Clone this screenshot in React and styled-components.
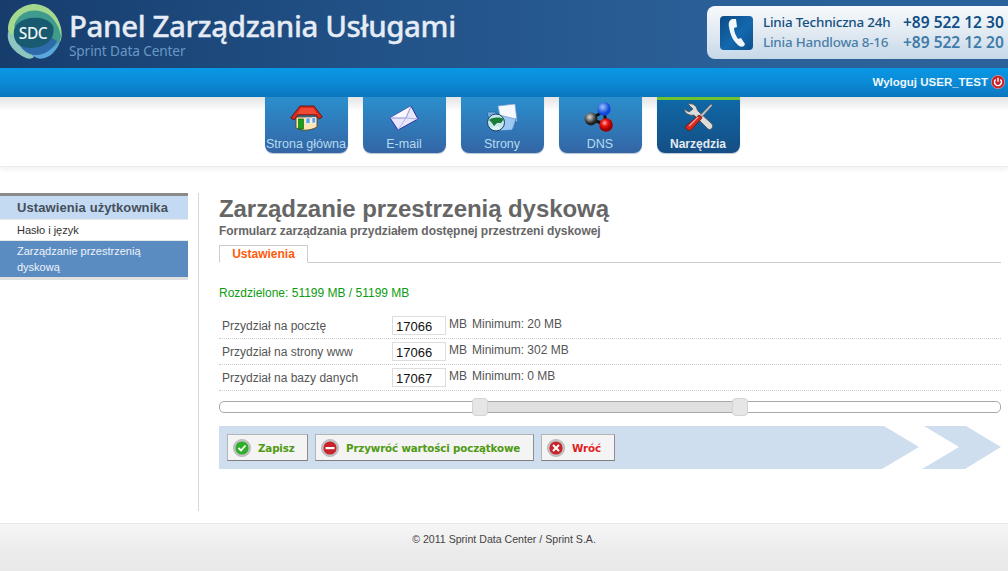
import React from "react";
import styled, { createGlobalStyle } from "styled-components";

const Global = createGlobalStyle`
  html, body { margin: 0; padding: 0; background: #fff; overflow: hidden; }
  body { font-family: "Liberation Sans", Arial, sans-serif; font-size: 12px; color: #555; }
  * { box-sizing: border-box; }
`;

const Page = styled.div`width: 1008px; height: 571px; overflow: hidden; display: flex; flex-direction: column;`;

const Header = styled.header`
  height: 68px; flex: none; display: flex; justify-content: space-between; overflow: hidden;
  background: linear-gradient(90deg, #173d6d 0%, #225389 40%, #2b6199 75%, #2c629b 100%);
`;
const Brand = styled.div`display: flex; padding: 4px 0 0 6px;`;
const BrandText = styled.div`margin-left: 7px; font-family: "Noto Sans", "Open Sans", sans-serif; display: flex; flex-direction: column;`;
const BrandTitle = styled.div`font-size: 29.5px; line-height: 34px; height: 34px; margin-top: 5px; color: #e6ecf5; letter-spacing: -0.4px; white-space: nowrap; font-weight: 500; -webkit-text-stroke: .3px #e6ecf5;`;
const BrandSub = styled.div`font-size: 13.6px; line-height: 16px; color: #6a97c6; white-space: nowrap; letter-spacing: -0.1px;`;

const PhonePanel = styled.div`
  width: 301px; height: 53px; margin-top: 6px; border-radius: 8px 0 0 8px; display: flex; align-items: center;
  padding-left: 13px; overflow: hidden; background: linear-gradient(180deg, #f7fafc 0%, #dfe8f1 55%, #c6d8e8 100%);
`;
const PhoneBadge = styled.div`width: 33px; height: 34px; flex: none; border-radius: 4px; margin-right: 10px; background: linear-gradient(135deg, #0b4a86, #1468ad 55%, #0c4f8f); display: flex; align-items: center; justify-content: center;`;
const PhoneGrid = styled.div`display: grid; grid-template-columns: 140px auto; row-gap: 1px; font-family: "Noto Sans", "Open Sans", sans-serif; white-space: nowrap;`;
const PhoneLabel = styled.div`font-size: 13.4px; line-height: 19px; font-weight: 500; letter-spacing: -0.2px; color: ${p => p.$dim ? "#4a7fa9" : "#14507f"};`;
const PhoneNumber = styled.div`font-size: 15.5px; line-height: 19px; font-weight: 600; letter-spacing: 0; color: ${p => p.$dim ? "#3f7ba8" : "#0f4f85"};`;

const UserBar = styled.div`
  height: 29px; flex: none; display: flex; justify-content: flex-end; align-items: center; gap: 3px; padding: 0 3px 2px 0;
  background: linear-gradient(180deg, #0998e4 0%, #0a8ad6 50%, #0a76bd 100%);
  font-weight: bold; color: #eef6fc; font-size: 11.5px;
`;

const Nav = styled.nav`
  height: 70px; flex: none; display: flex; justify-content: center;
  background: linear-gradient(180deg, #e4e4e4 0, #fff 14px);
  border-bottom: 1px solid #ececec; box-shadow: 0 3px 5px rgba(0,0,0,.05);
`;
const NavInner = styled.div`display: flex; gap: 15px; margin-left: -4px;`;
const Tab = styled.div`
  width: 83px; height: 56px; border-radius: 0 0 8px 8px; display: flex; flex-direction: column; align-items: center; white-space: nowrap;
  padding-top: ${p => p.$active ? "2px" : "5px"}; font-size: 12.5px; line-height: 14px; overflow: hidden;
  color: ${p => p.$active ? "#e4ebf1" : "#b5dbee"}; font-weight: ${p => p.$active ? "bold" : "normal"};
  background: ${p => p.$active ? "linear-gradient(180deg, #0f68a6 0%, #154e84 100%)" : "linear-gradient(180deg, #2b8fcd 0%, #3465a5 100%)"};
  border-top: ${p => p.$active ? "3px solid #6ec22f" : "0"};
  box-shadow: 0 1px 1px rgba(60,90,130,.35);
`;
const TabIcon = styled.div`height: 35px; flex: none; display: flex; align-items: center; padding-bottom: 4px;`;
const TabText = styled.div`font-size: ${p => p.$small ? "12px" : "inherit"};`;

const Body = styled.main`height: 318px; margin-top: 26px; flex: none; display: flex;`;
const Sidebar = styled.aside`width: 188px; flex: none; align-self: flex-start;`;
const SideHead = styled.div`height: 26px; border-top: 3px solid #8a8a8a; background: #c4daf3; font-weight: bold; font-size: 13px; line-height: 23px; padding-left: 17px; color: #444f5b; letter-spacing: .1px;`;
const SideItem = styled.div`
  padding: ${p => p.$active ? "2px 17px 2px" : "0 17px"}; font-size: 11px; line-height: ${p => p.$active ? "16px" : "20px"};
  background: ${p => p.$active ? "#5a8cc2" : "#fff"}; color: ${p => p.$active ? "#eef3f9" : "#333"};
  border-top: 1px solid #e8e8e8; border-bottom: ${p => p.$active ? "3px solid #e0e0e0" : "0"};
`;
const Content = styled.section`margin-left: 10px; width: 803px; border-left: 1px solid #d8d8d8; padding: 0 0 0 20px;`;
const Title = styled.h1`margin: 2px 0 0; font-size: 24px; line-height: 28px; color: #666; font-weight: bold; letter-spacing: -.07px;`;
const Subtitle = styled.div`font-size: 12px; font-weight: bold; line-height: 14px; color: #666; letter-spacing: -.05px; margin-top: 1px;`;
const Tabs = styled.div`height: 18px; margin-top: 7px; border-bottom: 1px solid #ccc;`;
const TabLabel = styled.div`width: 89px; height: 18px; border: 1px solid #ccc; border-bottom: 1px solid #fff; background: #fff; text-align: center; color: #ff5a0a; font-weight: bold; font-size: 12px; line-height: 16px;`;
const Summary = styled.div`margin-top: 23px; height: 15px; line-height: 15px; color: #0c9c10; font-size: 12px;`;
const Form = styled.div`margin-top: 12px;`;
const Row = styled.div`
  height: 26px; display: grid; grid-template-columns: 170px 57px 23px 1fr; padding-left: 3px; border-bottom: 1px dotted #ccc;
  font-size: 12px; color: #555;
`;
const RowLabel = styled.div`line-height: 26px;`;
const ValueBox = styled.div`width: 54px; height: 19px; margin-top: 3px; border: 1px solid #ddd; color: #111; font-size: 13px; line-height: 20px; padding-left: 3px;`;
const Unit = styled.div`line-height: 14px; padding-top: 4px;`;

const Slider = styled.div`margin-top: 10px; height: 12px; border: 1px solid #a9a9a9; border-radius: 5px; position: relative; background: #fff;`;
const Range = styled.div`position: absolute; top: 0; bottom: 0; background: #e0e0e0;`;
const Handle = styled.div`position: absolute; top: -4px; width: 16px; height: 18px; margin-left: -8px; border: 1px solid #d3d3d3; border-radius: 4px; background: #e6e6e6;`;

const ActionRow = styled.div`margin-top: 13px; height: 43px; display: flex; width: 782px;`;
const Band = styled.div`
  width: 700px; height: 43px; flex: none; background: #cfdeef; display: flex; gap: 7px; padding: 8px 0 0 8px;
  clip-path: polygon(0 0, 665px 0, 100% 21px, 663px 100%, 0 100%);
`;
const Chevron = styled.div`
  width: 79px; height: 43px; margin-left: 3px; background: #cfdeef; flex: none;
  clip-path: polygon(2px 0, 44px 0, 100% 21px, 43px 100%, 0 100%, 37px 21px);
`;
const Button = styled.div`
  height: 27px; width: ${p => p.$w}px; flex: none; display: flex; align-items: center; padding-left: 5px;
  border: 1px solid #b4b4b4; border-right-color: #8e8e8e; border-bottom-color: #808080; background: #f4f4f4;
  font-family: "DejaVu Sans", Verdana, sans-serif; font-weight: bold; font-size: 10.3px; white-space: nowrap;
  color: ${p => p.$red ? "#e01d1d" : "#4f9a12"};
`;
const ButtonText = styled.span`margin-left: ${p => p.$gap}px; letter-spacing: -.14px;`;

const Footer = styled.footer`
  margin-top: 12px; height: 48px; flex: none; text-align: center; font-size: 10.6px; line-height: 12px; padding: 9px 0 0 0; color: #444;
  border-top: 1px solid #e8e8e8; background: linear-gradient(180deg, #f6f6f6 0%, #ebebeb 60%, #e9e9e9 100%);
`;

const Logo = () => (
  <svg width="56" height="56" viewBox="0 0 56 56">
    <path d="M2 24C3 10 16 0 29 0c13 1 23 10 26 24 1 6 1 10-1 14L30 30 5 34C3 31 2 28 2 24Z" fill="#a4d88f" />
    <path d="M2 28l14 8 12 17c-2 2-5 2-8 1C9 49 0 40 2 28Z" fill="#8cc6bf" />
    <path d="M54 32c1 6-2 12-7 17-4 4-11 7-16 5-2-1-4-2-5-4l16-9Z" fill="#5aa6dd" />
    <path d="M18 9c8-4 18-3 25 2 7 6 11 14 12 22-2 6-6 10-11 12L26 38 8 22c2-6 5-10 10-13Z" fill="#3f9c8c" />
    <path d="M13 40c3 6 9 11 17 11 9 0 17-6 21-14L36 28 16 32Z" fill="#2d6aa9" />
    <path d="M8 26c1-6 8-11 17-12 9-1 18 1 22 8 2 7-1 15-9 19-8 4-19 4-25 0-4-3-6-9-5-15Z" fill="#185a70" />
    <text x="27" y="35" textAnchor="middle" fontFamily="Noto Sans, sans-serif" fontSize="15.5" fontWeight="500" letterSpacing="-.4" fill="#f0f5f5">SDC</text>
  </svg>
);
const PhoneIcon = () => (
  <svg width="20" height="30" viewBox="0 0 20 30">
    <path d="M5 1C3 2 1 4 2 9c1 7 4 14 9 18 2 2 4 2 6 1l1-2-4-6-3 1c-2-3-4-7-4-11l3-1-1-8Z" fill="#f1f6fa" />
  </svg>
);
const Power = () => (
  <svg width="14" height="14" viewBox="0 0 14 14">
    <circle cx="7" cy="7" r="6.7" fill="#c8242a" stroke="#e9b7b7" strokeWidth=".6" />
    <path d="M4.6 4.6a3.5 3.5 0 1 0 4.8 0" fill="none" stroke="#fff" strokeWidth="1.4" />
    <path d="M7 2.8v4" stroke="#fff" strokeWidth="1.4" />
  </svg>
);
const House = () => (
  <svg width="33" height="26" viewBox="0 0 33 26">
    <path d="M6 12h21v10c-7 4-15 4-21 1Z" fill="#fbe6b8" stroke="#5a3a10" strokeWidth=".8" />
    <rect x="8.5" y="14" width="5" height="10" fill="#16a016" stroke="#0a5a0a" strokeWidth=".6" />
    <rect x="16" y="13" width="4" height="5.5" fill="#5aa2ea" stroke="#fff" strokeWidth=".6" />
    <rect x="22" y="12.5" width="3.5" height="5.5" fill="#5aa2ea" stroke="#fff" strokeWidth=".6" />
    <path d="M.7 13 10 1h14l8.3 11-3 2-4-4H8l-4 5Z" fill="#d9291f" stroke="#5c1510" strokeWidth=".9" />
    <path d="M11 3h12l4 6H7Z" fill="#ee4a33" />
  </svg>
);
const Mail = () => (
  <svg width="30" height="26" viewBox="0 0 30 26">
    <path d="M1 13 22 1l7 13-20 11Z" fill="#e7e6fc" stroke="#2f2f9a" strokeWidth="1" />
    <path d="M1 13 17 13 22 1" fill="#f7f7ff" stroke="#7b7bd0" strokeWidth=".8" />
    <path d="M9 25l8-12 12 1" fill="none" stroke="#a6a6e2" strokeWidth=".8" />
  </svg>
);
const Folder = () => (
  <svg width="32" height="28" viewBox="0 0 32 28">
    <path d="M12 2 29 0l2 17-15 5Z" fill="#f5f8fd" stroke="#7aa0d4" strokeWidth=".7" />
    <path d="M1 8h8l2 2 13 8 6-3-2 10-22 2Z" fill="#77aee8" stroke="#2d5f9a" strokeWidth=".7" />
    <path d="M8 10l22 5-4 11-18 1Z" fill="#9cc9f3" stroke="#3e74b4" strokeWidth=".5" />
    <circle cx="10" cy="18.5" r="8.5" fill="#c6e8ea" stroke="#193f66" strokeWidth="1" />
    <path d="M3 16c4-3 10-3 15-1l-3 4-4 0-3 3-2-3Z" fill="#1c7d3a" />
    <path d="M5 24c3 2 7 2 10 0l-4-2Z" fill="#dff3f3" />
  </svg>
);
const Dns = () => (
  <svg width="32" height="31" viewBox="0 0 32 31">
    <defs>
      <radialGradient id="gb" cx=".4" cy=".35"><stop offset="0" stopColor="#9cc6ff" /><stop offset="1" stopColor="#0f45d8" /></radialGradient>
      <radialGradient id="gr" cx=".4" cy=".35"><stop offset="0" stopColor="#ffb0b0" /><stop offset=".5" stopColor="#f01010" /><stop offset="1" stopColor="#900" /></radialGradient>
      <radialGradient id="gk" cx=".4" cy=".35"><stop offset="0" stopColor="#ddd" /><stop offset="1" stopColor="#222" /></radialGradient>
    </defs>
    <path d="M7 17 20 9M20 8l2 14M7 17l15 6" stroke="#111" strokeWidth="3" />
    <circle cx="20" cy="7" r="6.7" fill="url(#gb)" />
    <circle cx="7" cy="17" r="6.4" fill="url(#gk)" />
    <circle cx="22" cy="23" r="6.8" fill="url(#gr)" />
  </svg>
);
const Tools = () => (
  <svg width="29" height="29" viewBox="0 0 29 29">
    <path d="M4 1c4-1 8 1 9 5l1 2 14 13c2 3-1 7-4 5L10 12C6 13 1 11 0 6l5 3 4-3Z" fill="#dcdcdc" stroke="#555" strokeWidth=".9" />
    <path d="M27 1l1.4 1.4L18 14l-1.8-1.8Z" fill="#c4c4c4" stroke="#555" strokeWidth=".6" />
    <path d="M15 12l3 3L7 27c-2 2-7-2-5-4Z" fill="#d92a20" stroke="#6b100c" strokeWidth=".8" />
    <path d="M5 23l9-9" stroke="#f6a9a0" strokeWidth="1.1" />
  </svg>
);
const Badge = ({ fill, children }) => (
  <svg width="18" height="18" viewBox="0 0 18 18">
    <circle cx="9" cy="9" r="8.6" fill="#c3c3c3" stroke="#999" strokeWidth=".5" />
    <circle cx="9" cy="9" r="6.6" fill={fill} />
    {children}
  </svg>
);

const rows = [
  ["Przydział na pocztę", "17066", "Minimum: 20 MB"],
  ["Przydział na strony www", "17066", "Minimum: 302 MB"],
  ["Przydział na bazy danych", "17067", "Minimum: 0 MB"],
];

const tabs = [
  ["Strona główna", <House />],
  ["E-mail", <Mail />],
  ["Strony", <Folder />],
  ["DNS", <Dns />],
];

export default function App() {
  return (
    <Page>
      <Global />
      <Header>
        <Brand>
          <Logo />
          <BrandText>
            <BrandTitle>Panel Zarządzania Usługami</BrandTitle>
            <BrandSub>Sprint Data Center</BrandSub>
          </BrandText>
        </Brand>
        <PhonePanel>
          <PhoneBadge><PhoneIcon /></PhoneBadge>
          <PhoneGrid>
            <PhoneLabel>Linia Techniczna 24h</PhoneLabel>
            <PhoneNumber>+89 522 12 30</PhoneNumber>
            <PhoneLabel $dim>Linia Handlowa 8-16</PhoneLabel>
            <PhoneNumber $dim>+89 522 12 20</PhoneNumber>
          </PhoneGrid>
        </PhonePanel>
      </Header>
      <UserBar>Wyloguj USER_TEST <Power /></UserBar>
      <Nav>
        <NavInner>
          {tabs.map(([label, icon]) => (
            <Tab key={label}><TabIcon>{icon}</TabIcon><TabText>{label}</TabText></Tab>
          ))}
          <Tab $active><TabIcon><Tools /></TabIcon><TabText $small>Narzędzia</TabText></Tab>
        </NavInner>
      </Nav>
      <Body>
        <Sidebar>
          <SideHead>Ustawienia użytkownika</SideHead>
          <SideItem>Hasło i język</SideItem>
          <SideItem $active>Zarządzanie przestrzenią dyskową</SideItem>
        </Sidebar>
        <Content>
          <Title>Zarządzanie przestrzenią dyskową</Title>
          <Subtitle>Formularz zarządzania przydziałem dostępnej przestrzeni dyskowej</Subtitle>
          <Tabs><TabLabel>Ustawienia</TabLabel></Tabs>
          <Summary>Rozdzielone: 51199 MB / 51199 MB</Summary>
          <Form>
            {rows.map(([label, value, min]) => (
              <Row key={label}>
                <RowLabel>{label}</RowLabel>
                <ValueBox>{value}</ValueBox>
                <Unit>MB</Unit>
                <Unit>{min}</Unit>
              </Row>
            ))}
          </Form>
          <Slider>
            <Range style={{ left: "33.33%", width: "33.34%" }} />
            <Handle style={{ left: "33.33%" }} />
            <Handle style={{ left: "66.67%" }} />
          </Slider>
          <ActionRow>
            <Band>
              <Button $w={81}>
                <Badge fill="#2fae2a"><path d="M5.5 9l2.5 2.5 4.5-5" fill="none" stroke="#fff" strokeWidth="1.8" /></Badge>
                <ButtonText $gap={7}>Zapisz</ButtonText>
              </Button>
              <Button $w={219}>
                <Badge fill="#c9242c"><rect x="4.5" y="8" width="9" height="2.2" fill="#fff" /></Badge>
                <ButtonText $gap={7}>Przywróć wartości początkowe</ButtonText>
              </Button>
              <Button $w={74} $red>
                <Badge fill="#c9242c"><path d="M6 6l6 6M12 6l-6 6" stroke="#fff" strokeWidth="1.9" /></Badge>
                <ButtonText $gap={7}>Wróć</ButtonText>
              </Button>
            </Band>
            <Chevron />
          </ActionRow>
        </Content>
      </Body>
      <Footer>© 2011 Sprint Data Center / Sprint S.A.</Footer>
    </Page>
  );
}
